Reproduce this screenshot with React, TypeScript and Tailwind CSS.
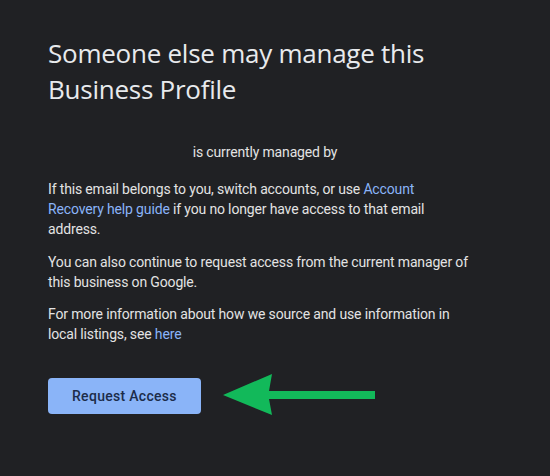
import React from "react";

export default function App() {
  return (
    <div className="w-[550px] h-[476px] bg-[#202124] overflow-hidden" style={{ fontFamily: "Roboto, 'Liberation Sans', sans-serif" }}>
      <div className="pl-12 pt-[35px] w-[468px]">
        <h1
          className="text-[26px] leading-[36px] text-[#e8eaed] font-normal tracking-[-0.25px]"
          style={{ fontFamily: "'Open Sans', 'Liberation Sans', sans-serif" }}
        >
          Someone else may manage this
          <br />
          Business Profile
        </h1>
        <div className="tracking-[-0.15px] text-[14px] leading-[20px] text-[#e3e3e3]">
          <p className="mt-[35px] text-center pl-[14px]">is currently managed by</p>
          <p className="mt-[17px]">
            If this email belongs to you, switch accounts, or use{" "}
            <span className="text-[#8ab4f8]">Account Recovery help guide</span> if you no longer have access to that email address.
          </p>
          <p className="mt-[13px]">
            You can also continue to request access from the current manager of this business on Google.
          </p>
          <p className="mt-[12px]">
            For more information about how we source and use information in local listings, see{" "}
            <span className="text-[#8ab4f8]">here</span>
          </p>
        </div>
        <div className="mt-[33px] flex items-center">
          <button className="h-[36px] px-6 rounded-[4px] bg-[#8ab4f8] text-[#1c2c4a] text-[14px] font-medium tracking-[0.3px]">
            Request Access
          </button>
          <svg width="152" height="41" viewBox="0 0 152 41" className="ml-[22px] -mt-[3px]">
            <polygon points="0,21 49,0 46,17 152,17 152,25 46,25 49,41" fill="#12b95a" />
          </svg>
        </div>
      </div>
    </div>
  );
}
